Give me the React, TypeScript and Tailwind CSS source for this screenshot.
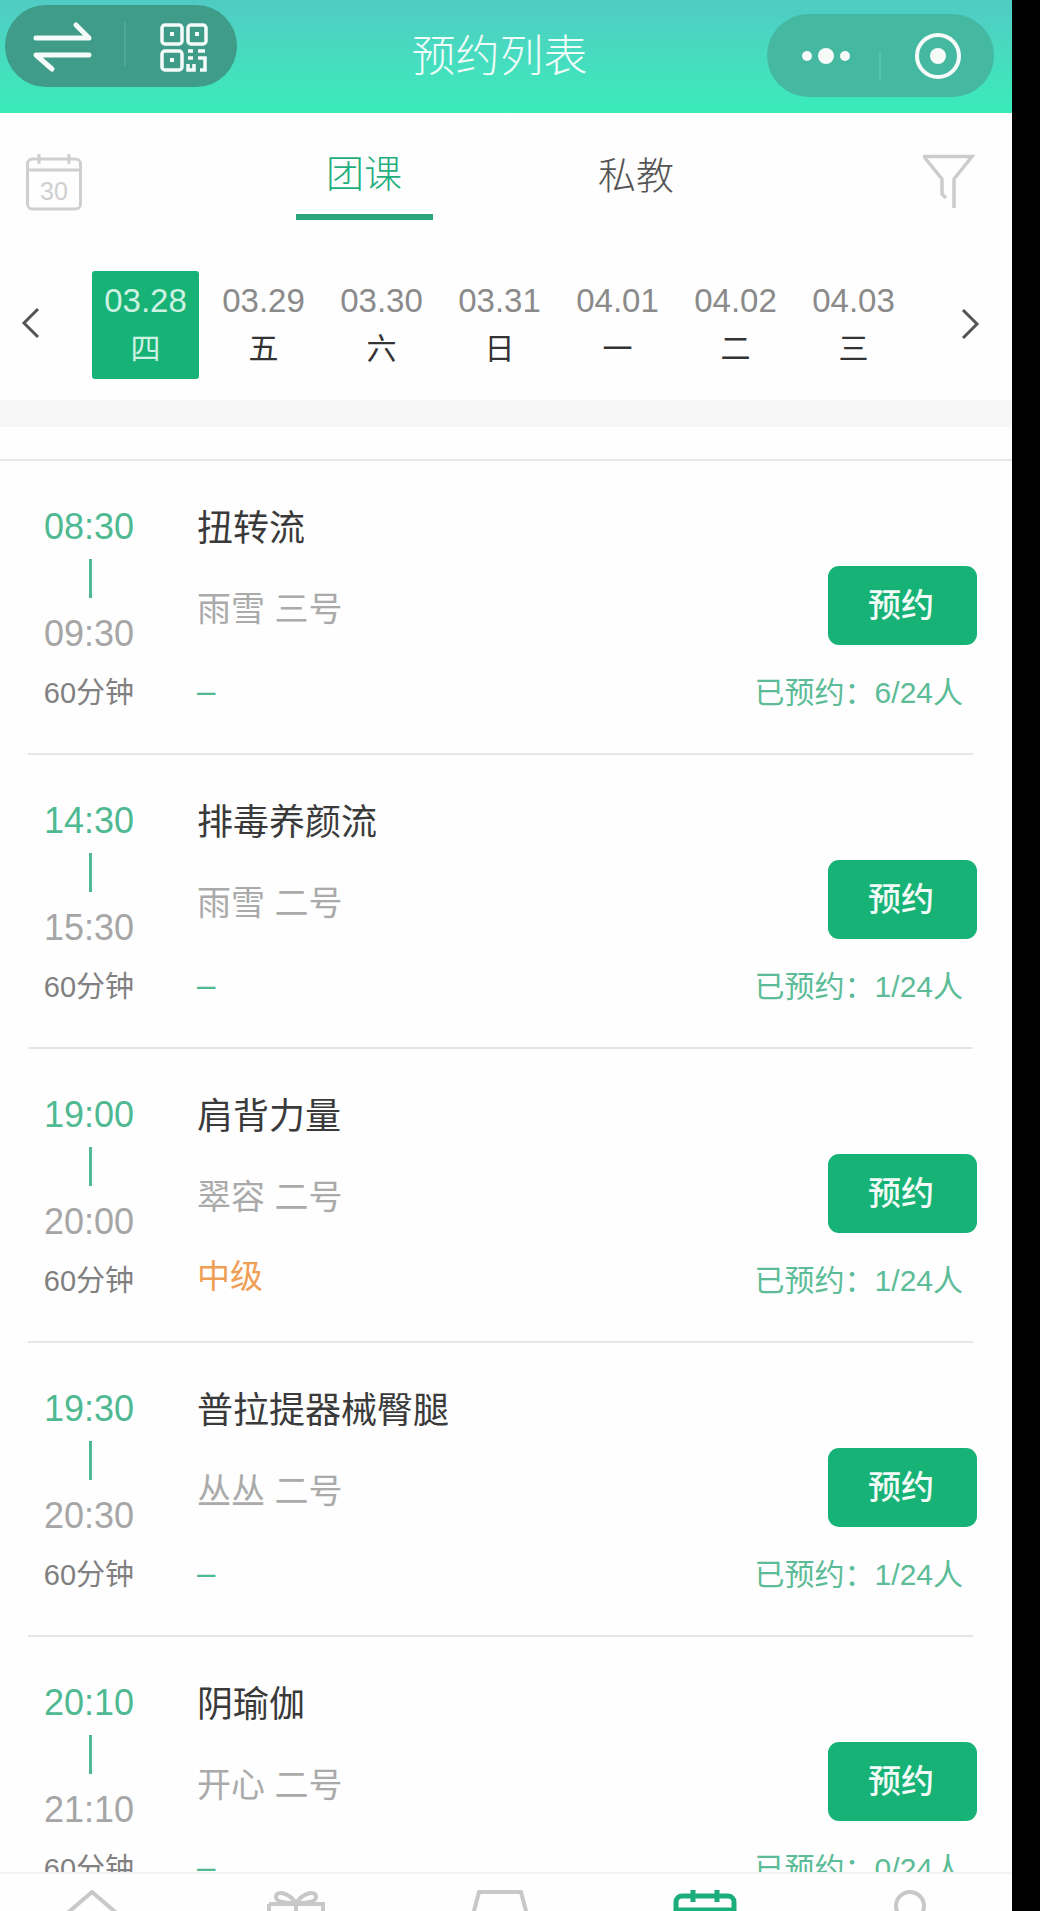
const days = [
  { date: '03.28', day: '四', active: true },
  { date: '03.29', day: '五' },
  { date: '03.30', day: '六' },
  { date: '03.31', day: '日' },
  { date: '04.01', day: '一' },
  { date: '04.02', day: '二' },
  { date: '04.03', day: '三' },
];

const classes = [
  { start: '08:30', end: '09:30', name: '扭转流', teacher: '雨雪 三号', booked: '6/24' },
  { start: '14:30', end: '15:30', name: '排毒养颜流', teacher: '雨雪 二号', booked: '1/24' },
  { start: '19:00', end: '20:00', name: '肩背力量', teacher: '翠容 二号', booked: '1/24', level: '中级' },
  { start: '19:30', end: '20:30', name: '普拉提器械臀腿', teacher: '丛丛 二号', booked: '1/24' },
  { start: '20:10', end: '21:10', name: '阴瑜伽', teacher: '开心 二号', booked: '0/24' },
];

function ClassRow({ item }: { item: (typeof classes)[number] }) {
  return (
    <div className="flex h-[292px] shrink-0">
      {/* time column */}
      <div className="ml-[28px] flex w-[122px] flex-col items-center pt-[46px]">
        <div className="text-[36px] leading-[40px] text-[#4fb992]">{item.start}</div>
        <div className="ml-[3px] mt-[12px] h-[39px] w-[3px] bg-[#4fb992]" />
        <div className="mt-[16px] text-[36px] leading-[40px] text-[#a6a6a6]">{item.end}</div>
        <div className="mt-[21px] text-[29px] leading-[36px] text-[#808080]">60分钟</div>
      </div>
      {/* info column */}
      <div className="ml-[47px] flex flex-1 flex-col pt-[46px]">
        <div className="text-[36px] leading-[44px] text-[#3a3a3a]">{item.name}</div>
        <div className="mt-[38px] text-[34px] leading-[40px] text-[#aaaaaa]">{item.teacher}</div>
        {item.level ? (
          <div className="mt-[40px] text-[33px] leading-[40px] text-[#ef9f55]">{item.level}</div>
        ) : (
          <div className="mt-[42px] text-[33px] leading-[40px] text-[#4fb992]">–</div>
        )}
      </div>
      {/* booking column */}
      <div className="mr-[35px] flex flex-col items-end pt-[105px]">
        <div className="flex h-[79px] w-[149px] items-center justify-center rounded-[11px] bg-[#17b275] text-[33px] font-medium text-[#f2fbf7]">
          <span className="mr-[3px]">预约</span>
        </div>
        <div className="mr-[14px] mt-[30px] text-[30px] leading-[36px] whitespace-nowrap text-[#5cbc97]">
          已预约：{item.booked}人
        </div>
      </div>
    </div>
  );
}

export default function App() {
  return (
    <div className="h-[1911px] w-[1040px] overflow-hidden bg-black [font-family:'Liberation_Sans','Noto_Sans_CJK_SC',sans-serif]">
      <div className="flex h-full w-[1012px] flex-col bg-[#fefefe]">
        {/* title bar */}
        <div className="flex h-[113px] shrink-0 items-center justify-between bg-gradient-to-b from-[#50cbc4] to-[#39ecb9]">
          <div className="relative ml-[5px] mb-[21px] h-[82px] w-[232px] rounded-full bg-[#3e9c89]">
            <svg className="absolute inset-0" width="232" height="82" viewBox="0 0 232 82" fill="none" stroke="#f4fbf9">
              <path d="M31 33H84L71 20M84 50H31L47 64" strokeWidth="5" strokeLinecap="round" strokeLinejoin="round" />
              <path d="M120 17V61" stroke="#56ab99" strokeWidth="1.5" />
              <g strokeWidth="3.5">
                <rect x="157" y="20" width="20" height="19" rx="3" />
                <rect x="183" y="20" width="18" height="19" rx="3" />
                <rect x="157" y="46" width="20" height="19" rx="3" />
                <path d="M183 46H188M193 46H200M183 53H188M193 53H200V65H195M183 59V65H189V59" />
              </g>
              <g fill="#f4fbf9" stroke="none">
                <rect x="165" y="27" width="4" height="4" />
                <rect x="190" y="27" width="4" height="4" />
                <rect x="165" y="53" width="4" height="4" />
              </g>
            </svg>
          </div>
          <div className="mr-[5px] text-[44px] leading-[60px] font-light text-[#effcf8]">预约列表</div>
          <div className="relative mr-[18px] mb-[2px] h-[83px] w-[227px] rounded-full bg-[#45b8a1]">
            <svg className="absolute inset-0" width="227" height="83" viewBox="0 0 227 83" fill="#f6fbfa">
              <circle cx="40" cy="42" r="5" />
              <circle cx="59" cy="42" r="8" />
              <circle cx="78" cy="42" r="5" />
              <path d="M113 38V66" stroke="#5cc4ae" strokeWidth="1.5" />
              <circle cx="171" cy="42" r="21" fill="none" stroke="#f6fbfa" strokeWidth="4" />
              <circle cx="171" cy="42" r="8" />
            </svg>
          </div>
        </div>

        {/* tabs */}
        <div className="relative flex h-[107px] shrink-0 justify-center">
          <svg className="absolute left-[24px] top-[39px]" width="60" height="60" viewBox="0 0 60 60" fill="none" stroke="#cfcfcf" strokeWidth="3">
            <rect x="3.5" y="7" width="53" height="50" rx="5" />
            <path d="M4 18H56M15 2V12M45 2V12" />
            <text x="30" y="48" fontSize="25" textAnchor="middle" fill="#cfcfcf" stroke="none">30</text>
          </svg>
          <div className="ml-[-12px] flex w-[137px] flex-col items-center">
            <div className="mt-[36px] text-[38px] leading-[50px] font-light text-[#1fae7c]">团课</div>
            <div className="mt-[15px] h-[6px] w-full bg-[#2da57a]" />
          </div>
          <div className="ml-[135px] mt-[38px] w-[137px] text-center text-[38px] leading-[50px] font-light text-[#555555]">私教</div>
          <svg className="absolute left-[921px] top-[40px]" width="54" height="56" viewBox="0 0 54 56" fill="none" stroke="#cccccc" strokeWidth="3.5">
            <path d="M2 3.5H51L33 26V55M4 5L21 26V41L25 45" />
          </svg>
        </div>

        {/* date strip */}
        <div className="flex h-[180px] shrink-0 items-start pt-[51px]">
          <svg className="ml-[21px] mt-[36px]" width="19" height="32" viewBox="0 0 19 32" fill="none" stroke="#555555" strokeWidth="3">
            <path d="M17 2L3 16L17 30" />
          </svg>
          <div className="ml-[52px] flex">
            {days.map((d) => (
              <div
                key={d.date}
                className={
                  d.active
                    ? 'mr-[11px] flex h-[108px] w-[107px] flex-col items-center rounded-[3px] bg-[#17b275] text-[#cdf1e2]'
                    : 'mr-[11px] flex h-[108px] w-[107px] flex-col items-center text-[#333333]'
                }
              >
                <div className={d.active ? 'mt-[11px] text-[33px] leading-[38px]' : 'mt-[11px] text-[33px] leading-[38px] text-[#8a8a8a]'}>
                  {d.date}
                </div>
                <div className="mt-[10px] text-[30px] leading-[38px]">{d.day}</div>
              </div>
            ))}
          </div>
          <svg className="ml-[43px] mt-[37px]" width="19" height="32" viewBox="0 0 19 32" fill="none" stroke="#555555" strokeWidth="3">
            <path d="M2 2L16 16L2 30" />
          </svg>
        </div>

        <div className="h-[27px] shrink-0 bg-[#f7f7f7]" />
        <div className="h-[32px] shrink-0" />
        <div className="h-[2px] shrink-0 bg-[#e8e8e8]" />

        {/* class list */}
        <div className="flex min-h-0 flex-1 flex-col overflow-hidden">
          {classes.map((item) => (
            <div key={item.start}>
              <ClassRow item={item} />
              <div className="ml-[28px] mr-[39px] h-[2px] bg-[#e6e6e6]" />
            </div>
          ))}
        </div>

        {/* bottom tab bar */}
        <div className="flex h-[39px] shrink-0 items-start justify-between overflow-hidden border-t-2 border-[#f3f3f3] bg-[#fefefe] pl-[62px] pr-[72px] pt-[16px]">
          <svg width="60" height="60" viewBox="0 0 60 60" fill="none" stroke="#c8c8c8" strokeWidth="4">
            <path d="M2 26L30 2L58 26V58H2V26" />
          </svg>
          <svg width="60" height="60" viewBox="0 0 60 60" fill="none" stroke="#c8c8c8" strokeWidth="4">
            <path d="M30 13C22 2 10 0 10 7C10 12 20 13 30 13C40 13 50 12 50 7C50 0 38 2 30 13ZM3 14H57V60M3 14V60M30 14V60" />
          </svg>
          <svg width="60" height="60" viewBox="0 0 60 60" fill="none" stroke="#c8c8c8" strokeWidth="4">
            <path d="M10 2H52L62 40H0L10 2Z" />
          </svg>
          <svg width="64" height="60" viewBox="0 0 64 60" fill="none" stroke="#1bae7a" strokeWidth="5">
            <rect x="3" y="6" width="58" height="50" rx="6" />
            <path d="M3 20H61M20 0V12M44 0V12" />
          </svg>
          <svg width="60" height="60" viewBox="0 0 60 60" fill="none" stroke="#c8c8c8" strokeWidth="4">
            <circle cx="30" cy="16" r="14" />
          </svg>
        </div>
      </div>
    </div>
  );
}
